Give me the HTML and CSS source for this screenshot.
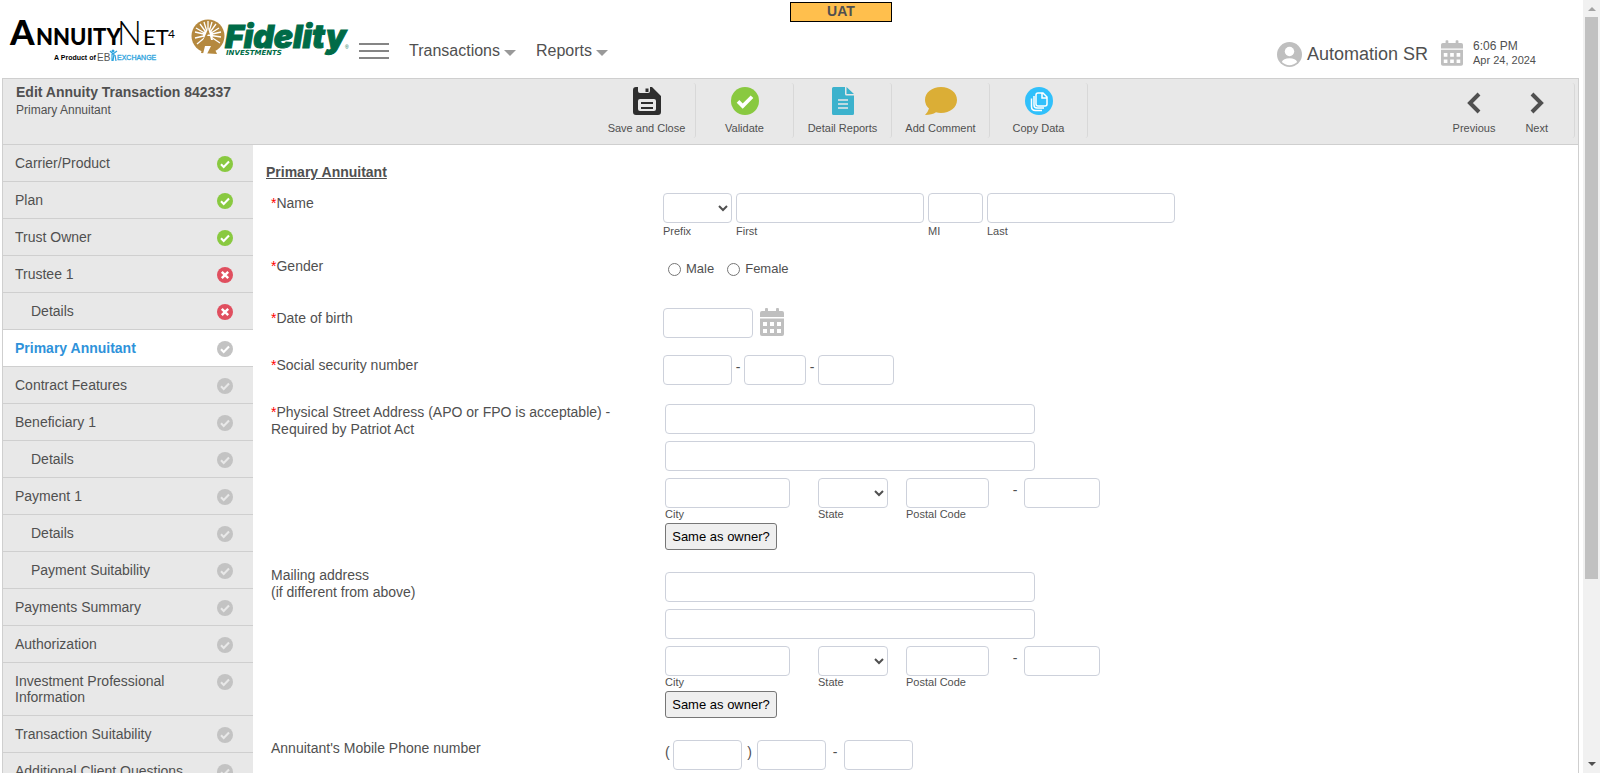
FILE: index.html
```html
<!DOCTYPE html>
<html lang="en">
<head>
<meta charset="utf-8">
<title>Edit Annuity Transaction</title>
<link rel="stylesheet" href="styles.css">
</head>
<body>
<svg class="defs" aria-hidden="true">
  <symbol id="ok" viewBox="0 0 16 16"><circle cx="8" cy="8" r="8" fill="currentColor"/><path d="M4 8.2l2.7 2.7L12 5.6" fill="none" stroke="var(--mark)" stroke-width="2.1"/></symbol>
  <symbol id="bad" viewBox="0 0 16 16"><circle cx="8" cy="8" r="8" fill="currentColor"/><path d="M4.800 4.800l6.400 6.400M11.200 4.800l-6.400 6.400" fill="none" stroke="#fff" stroke-width="2.400"/></symbol>
  <symbol id="cal" viewBox="0 0 24 28"><path fill="currentColor" fill-rule="evenodd" d="M5 1q0-1 1-1h1q1 0 1 1v2h8V1q0-1 1-1h1q1 0 1 1v2h3a2 2 0 0 1 2 2v4H0V5a2 2 0 0 1 2-2h3zM0 10.500h24V26a2 2 0 0 1-2 2H2a2 2 0 0 1-2-2zM3 14v4h4v-4zm7 0v4h4v-4zm7 0v4h4v-4zM3 21v4h4v-4zm7 0v4h4v-4zm7 0v4h4v-4z"/></symbol>
</svg>
<div class="screen">
  <div class="page">
    <header class="header">
      <div class="uat">UAT</div>
      <svg class="logo-annuity" width="172" height="48" viewBox="0 0 172 48" role="img" aria-label="AnnuityNet4">
        <g class="lato"><text class="heavy" x="0" y="29" font-size="35">A</text><text class="heavy" x="26" y="29" font-size="22">NNUITY</text>
        <text class="thin" x="107" y="29" font-size="33">N</text><text x="133" y="29" font-size="22">ET</text><text x="158" y="22" font-size="12">4</text></g>
        <g class="tag"><text x="44" y="44" font-size="7" font-weight="bold">A Product of</text><text class="eb" x="87" y="45" font-size="10">EB</text>
        <text class="exchange" x="107" y="44" font-size="7">EXCHANGE</text></g>
        <path d="M102 38v7M100 35l3 3 4-3M105 39l1 6M104 38l-1 7" stroke="#2da3dd" stroke-width="1.200" fill="none"/><circle cx="103" cy="35" r="1.500" fill="#2da3dd"/>
      </svg>
      <svg class="logo-fidelity" width="162" height="42" viewBox="0 0 162 42" role="img" aria-label="Fidelity Investments">
        <circle cx="17" cy="18" r="16.500" fill="#b5893f"/>
        <path d="M17 17V3M17 17l4-13M17 17l8-11M17 17l11-7M17 17l13-3M17 17l13 2M17 17l12 8M17 17L13 4M17 17L9 6M17 17L5 10M17 17L4 14M17 17L4 20M17 17L6 26" stroke="#fff" stroke-width="1.300"/>
        <circle cx="17" cy="17" r="5" fill="#fff"/>
        <path d="M17 11L8 32h18z" fill="#b5893f"/>
        <path d="M17.500 10l1 0 3.500 12h-2l-1-4h-3l1-1.500h2l-1-4z" fill="#fff"/>
        <path d="M10 35l2.500-9h9L26 36z" fill="#b5893f"/><path d="M12 36l2-8h6l-4 8z" fill="#fff"/>
        <text class="fid" x="34" y="30" font-size="32">Fidelity</text>
        <text class="inv" x="35" y="37" font-size="7">INVESTMENTS</text>
        <text class="reg" x="154" y="31" font-size="5">®</text>
      </svg>
      <button class="burger" aria-label="Menu"><span></span><span></span><span></span></button>
      <nav class="menu"><button>Transactions<i class="caret"></i></button><button>Reports<i class="caret"></i></button></nav>
      <div class="account">
        <svg width="25" height="25" viewBox="0 0 25 25"><circle cx="12.500" cy="12.500" r="12.500" fill="#bfbfbf"/><circle cx="12.500" cy="9.500" r="4.700" fill="#fff"/><path d="M4.800 20a8 5 0 0 1 15.400 0 11 11 0 0 1-15.400 0z" fill="#fff"/></svg>
        <span class="user">Automation SR</span>
        <svg class="cal-head" width="22" height="26"><use href="#cal"/></svg>
        <div class="clock"><div class="time">6:06 PM</div><div class="date">Apr 24, 2024</div></div>
      </div>
    </header>
    <div class="frame">
      <div class="toolbar">
        <div class="heading"><h1>Edit Annuity Transaction 842337</h1><p>Primary Annuitant</p></div>
        <div class="actions">
          <button class="tool"><svg width="28" height="28" viewBox="0 0 28 28"><path fill="#2e2e2e" d="M3 0h2v4q0 2 2 2h8q2 0 2-2V0h2l9 9v16q0 3-3 3H3q-3 0-3-3V3q0-3 3-3z"/><path fill="#2e2e2e" d="M12.500 1.500h3V5h-3z"/><rect x="5" y="12" width="18" height="12" rx="2" fill="#e8e8e8"/><path d="M8 16h12M8 21h12" stroke="#2e2e2e" stroke-width="2"/></svg>Save and Close</button>
          <button class="tool"><svg class="green" width="28" height="28"><use href="#ok"/></svg>Validate</button>
          <button class="tool"><svg width="22" height="28" viewBox="0 0 22 28"><path fill="#3cb2cd" d="M1.500 0H13v7q0 1.500 1.500 1.500H22V26.500q0 1.500-1.500 1.500h-19Q0 28 0 26.500v-25Q0 0 1.500 0zM14.500 0L22 7h-7.500z"/><path d="M6 13h10M6 17h10M6 21h10" stroke="#e8e8e8" stroke-width="1.500"/></svg>Detail Reports</button>
          <button class="tool"><svg width="32" height="28" viewBox="0 0 32 28"><path fill="#dbae36" d="M16 0c9 0 16 5.500 16 13s-7 13-16 13q-3 0-5-.7Q7 28 0 28q3-3 4-6.500Q0 18 0 13C0 5.500 7 0 16 0z"/></svg>Add Comment</button>
          <button class="tool"><svg width="28" height="28" viewBox="0 0 28 28"><circle cx="14" cy="14" r="14" fill="#30c0fb"/><path d="M13 6h5l4 4v7q0 2-2 2h-7q-2 0-2-2V8q0-2 2-2zM17 6v5h5M9 9v9q0 3 3 3h7M6.500 11.500v8q0 4 4 4H17" fill="none" stroke="#fff" stroke-width="1.500"/></svg>Copy Data</button>
        </div>
        <div class="steps">
          <button><svg width="14" height="22" viewBox="0 0 14 22"><path d="M12 2L3 11l9 9" fill="none" stroke="#505050" stroke-width="4"/></svg>Previous</button>
          <button><svg width="14" height="22" viewBox="0 0 14 22"><path d="M2 2l9 9-9 9" fill="none" stroke="#505050" stroke-width="4"/></svg>Next</button>
        </div>
      </div>
      <div class="body">
        <nav class="side">
          <a href="#">Carrier/Product<svg class="green"><use href="#ok"/></svg></a>
          <a href="#">Plan<svg class="green"><use href="#ok"/></svg></a>
          <a href="#">Trust Owner<svg class="green"><use href="#ok"/></svg></a>
          <a href="#">Trustee 1<svg class="red"><use href="#bad"/></svg></a>
          <a href="#" class="sub">Details<svg class="red"><use href="#bad"/></svg></a>
          <a href="#" class="current" aria-current="page">Primary Annuitant<svg><use href="#ok"/></svg></a>
          <a href="#">Contract Features<svg><use href="#ok"/></svg></a>
          <a href="#">Beneficiary 1<svg><use href="#ok"/></svg></a>
          <a href="#" class="sub">Details<svg><use href="#ok"/></svg></a>
          <a href="#">Payment 1<svg><use href="#ok"/></svg></a>
          <a href="#" class="sub">Details<svg><use href="#ok"/></svg></a>
          <a href="#" class="sub">Payment Suitability<svg><use href="#ok"/></svg></a>
          <a href="#">Payments Summary<svg><use href="#ok"/></svg></a>
          <a href="#">Authorization<svg><use href="#ok"/></svg></a>
          <a href="#">Investment Professional Information<svg><use href="#ok"/></svg></a>
          <a href="#">Transaction Suitability<svg><use href="#ok"/></svg></a>
          <a href="#">Additional Client Questions<svg><use href="#ok"/></svg></a>
        </nav>
        <main class="form">
          <h2>Primary Annuitant</h2>
          <div class="row name">
            <div class="label"><b>*</b>Name</div>
            <div class="line names">
              <div class="field w-s"><select id="prefix"><option></option></select><label for="prefix">Prefix</label></div>
              <div class="field w-name"><input id="first"><label for="first">First</label></div>
              <div class="field w-mi"><input id="mi"><label for="mi">MI</label></div>
              <div class="field w-name"><input id="last"><label for="last">Last</label></div>
            </div>
          </div>
          <div class="row gender">
            <div class="label"><b>*</b>Gender</div>
            <div class="radios"><label><input type="radio" name="gender">Male</label><label><input type="radio" name="gender">Female</label></div>
          </div>
          <div class="row dob">
            <label class="label" for="dob"><b>*</b>Date of birth</label>
            <div class="line dates"><input id="dob" class="w-dob"><button class="pick" aria-label="Choose date"><svg width="24" height="28"><use href="#cal"/></svg></button></div>
          </div>
          <div class="row ssn">
            <label class="label" for="ssn1"><b>*</b>Social security number</label>
            <div class="line"><input id="ssn1" class="w-s"><span class="dash">-</span><input class="w-ssn2" aria-label="Middle two digits"><span class="dash">-</span><input class="w-ssn3" aria-label="Last four digits"></div>
          </div>
          <div class="row address">
            <label class="label" for="street"><b>*</b>Physical Street Address (APO or FPO is acceptable) - Required by Patriot Act</label>
            <div class="stack">
              <input id="street" class="w-street"><input class="w-street" aria-label="Street address line 2">
              <div class="line">
                <div class="field city"><input id="city"><label for="city">City</label></div>
                <div class="field state"><select id="state"><option></option></select><label for="state">State</label></div>
                <div class="field zip"><input id="zip"><label for="zip">Postal Code</label></div>
                <span class="dash zipdash">-</span><input class="w-ssn3" aria-label="Postal code extension">
              </div>
              <button class="same">Same as owner?</button>
            </div>
          </div>
          <div class="row mailing">
            <label class="label" for="mstreet">Mailing address<br>(if different from above)</label>
            <div class="stack">
              <input id="mstreet" class="w-street"><input class="w-street" aria-label="Mailing address line 2">
              <div class="line">
                <div class="field city"><input id="mcity"><label for="mcity">City</label></div>
                <div class="field state"><select id="mstate"><option></option></select><label for="mstate">State</label></div>
                <div class="field zip"><input id="mzip"><label for="mzip">Postal Code</label></div>
                <span class="dash zipdash">-</span><input class="w-ssn3" aria-label="Mailing postal code extension">
              </div>
              <button class="same">Same as owner?</button>
            </div>
          </div>
          <div class="row phone">
            <label class="label" for="area">Annuitant's Mobile Phone number</label>
            <div class="line phones"><span class="open">(</span><input id="area" class="w-s"><span class="dash wide">)</span><input class="w-s" aria-label="Exchange"><span class="dash long">-</span><input class="w-s" aria-label="Line number"></div>
          </div>
        </main>
      </div>
    </div>
  </div>
  <div class="scrollbar" aria-hidden="true"><i class="up"></i><div class="track"><div class="thumb"></div></div><i class="down"></i></div>
</div>
</body>
</html>
```
FILE: styles.css
```css
* { box-sizing: border-box; }
body { margin: 0; font: 14px/16px "Liberation Sans", Arial, sans-serif; color: #505050; background: #fff; }
button { font: inherit; color: inherit; background: none; border: 0; padding: 0; }
.defs { position: absolute; width: 0; height: 0; }
.screen { display: flex; height: 100vh; overflow: hidden; }
.page { flex: 1; min-width: 0; display: flex; flex-direction: column; }

.header { position: relative; display: flex; flex: none; height: 78px; padding-left: 10px; }
.uat { position: absolute; top: 2px; left: 53%; width: 102px; height: 20px; margin-left: -49px; border: 1px solid #000; background: #ffbf4d; font-weight: bold; text-align: center; }
.logo-annuity { margin-top: 16px; overflow: visible; }
.lato { font-family: Lato, sans-serif; fill: #000; }
.heavy { font-weight: 900; }
.thin { font-weight: 300; }
.tag { font-family: "Liberation Sans", sans-serif; fill: #000; }
.eb { fill: #555; }
.exchange { fill: #2da3dd; stroke: #2da3dd; stroke-width: .3px; }
.logo-fidelity { margin: 18px 0 0 9px; overflow: visible; }
.fid { font-family: Inter, sans-serif; font-weight: 900; font-style: italic; fill: #006b47; stroke: #006b47; stroke-width: 1px; }
.inv { font-family: "DejaVu Sans", sans-serif; font-weight: bold; font-style: italic; fill: #006b47; }
.reg { fill: #006b47; }
.burger { width: 30px; height: 16px; margin: 43px 0 0 6px; display: flex; flex-direction: column; justify-content: space-between; }
.burger span { height: 2px; width: 30px; background: #858585; }
.menu { display: flex; gap: 20px; margin: 41px 0 0 20px; height: 20px; font-size: 16px; line-height: 20px; }
.menu button { display: flex; align-items: center; gap: 4px; }
.caret { border: 6px solid transparent; border-top-color: #999; border-bottom: 0; margin-top: 4px; }
.account { display: flex; align-items: center; margin: 38px 47px 0 auto; height: 32px; }
.user { font-size: 18px; line-height: 24px; margin: 0 13px 0 5px; }
.cal-head { color: #bfbfbf; margin-bottom: 2px; }
.clock { margin: 0 0 3px 10px; line-height: 14px; }
.time { font-size: 12px; }
.date { font-size: 11px; }

.frame { flex: 1; min-height: 0; display: flex; flex-direction: column; margin: 0 4px 0 2px; border: 1px solid #cfcfcf; border-bottom: 0; }
.toolbar { flex: none; display: grid; grid-template-columns: 595fr 490px 490fr; height: 66px; background: #e8e8e8; border-bottom: 1px solid #cfcfcf; font-size: 11px; --mark: #fff; }
.heading { padding: 4px 0 0 13px; }
.heading h1 { margin: 0; font-size: 14px; line-height: 18px; }
.heading p { margin: 0; font-size: 12px; line-height: 18px; }
.actions { display: grid; grid-template-columns: repeat(5, 1fr); margin: 4px 0 6px; }
.tool { display: flex; flex-direction: column; align-items: center; justify-content: flex-start; gap: 5px; padding-top: 4px; border-right: 1px solid #d8d8d8; border-radius: 3px; }
.steps { display: flex; justify-content: flex-end; gap: 30px; margin: 4px 3px 6px 0; padding-right: 26px; border-right: 1px solid #d8d8d8; border-radius: 3px; }
.steps button { display: flex; flex-direction: column; align-items: center; justify-content: flex-start; gap: 6px; padding-top: 9px; }

.body { flex: 1; min-height: 0; display: flex; overflow: hidden; }
.side { flex: none; width: 250px; --mark: #e8e8e8; }
.side a { display: flex; justify-content: space-between; padding: 10px 20px 10px 12px; border-bottom: 1px solid #cfcfcf; background: #e8e8e8; color: inherit; text-decoration: none; }
.side a.sub { padding-left: 28px; }
.side a.current { background: #fff; color: #2e92da; font-weight: bold; --mark: #fff; }
.side svg { flex: none; width: 16px; height: 16px; margin-top: 1px; margin-bottom: -1px; margin-left: 20px; color: #c3c3c3; }
.side .green, .green { color: #89c940; --mark: #fff; }
.side .red { color: #e04f5f; }

.form { flex: 1; min-width: 0; padding: 19px 0 0 13px; }
.form h2 { margin: 0 0 13px; font-size: 14px; line-height: 16px; text-decoration: underline; }
.row { display: flex; padding-left: 5px; }
.row .label { flex: none; width: 392px; padding: 2px 45px 0 0; line-height: 17px; }
.label b { color: red; font-weight: normal; }
.name { min-height: 63px; }
.gender { min-height: 52px; }
.dob { min-height: 47px; }
.ssn { min-height: 49px; }
.address { min-height: 168px; }
.mailing { min-height: 168px; }
.address .label, .phone .label { padding-top: 0; }
.mailing .label { padding-top: 0; margin-top: -5px; }
.form input:not([type]), .form select { display: block; height: 30px; border: 1px solid #cdd1db; border-radius: 4px; background: #fff; color: #505050; font: inherit; }
.form select { width: 100%; }
.line { display: flex; }
.names { gap: 4px; }
.dates { gap: 7px; }
.field { display: flex; flex-direction: column; font-size: 11px; line-height: 12px; }
.field input { width: 100%; }
.names label { margin-top: 2px; }
.w-s { width: 69px; }
.w-name { width: 188px; }
.w-mi { width: 55px; }
.w-dob { width: 90px; }
.w-ssn2 { width: 62px; }
.w-ssn3 { width: 76px; }
.w-street { width: 370px; }
.pick { color: #bfbfbf; height: 28px; }
.dash { width: 12px; text-align: center; line-height: 24px; }
.dash.wide { width: 15px; }
.dash.long { width: 18px; }
.dash.zipdash { width: 18px; margin-left: 17px; }
.radios { display: flex; gap: 12px; padding: 5px 0 0 4px; font-size: 13px; }
.radios label { display: flex; height: 16px; align-items: center; }
.radios input { width: 13px; height: 13px; margin: 0 5px 0 1px; }
.stack { display: flex; flex-direction: column; align-items: flex-start; gap: 7px; padding-left: 2px; }
.city { width: 125px; }
.state { width: 70px; margin-left: 28px; }
.zip { width: 83px; margin-left: 18px; }
.same { width: 112px; height: 27px; margin-top: -4px; border: 1px solid #767676; border-radius: 3px; background: #efefef; color: #000; font-size: 13px; white-space: nowrap; }
.phones { padding-left: 2px; }
.open { width: 8px; line-height: 24px; }

.scrollbar { flex: none; width: 17px; padding: 0 2px; background: #f1f1f1; display: flex; flex-direction: column; align-items: center; }
.track { flex: 1; width: 13px; }
.thumb { height: 76%; background: #c1c1c1; }
.up, .down { border: 4px solid transparent; }
.up { border-top: 0; border-bottom-color: #a3a3a3; margin: 7px 0 6px; }
.down { border-bottom: 0; border-top-color: #505050; margin: 6px 0 7px; }
```
